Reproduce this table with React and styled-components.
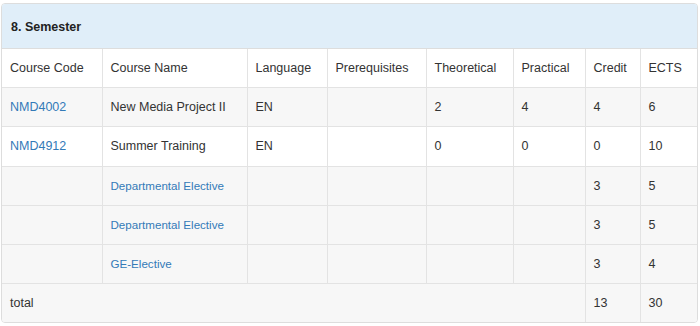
import React from "react";
import styled, { createGlobalStyle } from "styled-components";

const Global = createGlobalStyle`
  html, body { margin: 0; padding: 0; background: #fff; }
  body { font-family: "Liberation Sans", Arial, Helvetica, sans-serif; font-size: 12.5px; color: #333; }
`;

const Page = styled.div`
  padding: 3px 2px 0 1px;
`;

const Panel = styled.div`
  border: 1px solid #ddd;
  border-radius: 4px;
  overflow: hidden;
  background: #fff;
`;

const Heading = styled.div`
  background: #e0eef9;
  padding: 13px 9px 11px 9px;
  line-height: 20px;
  font-weight: bold;
  font-size: 12.5px;
  color: #222;
  border-bottom: 1px solid #ddd;
`;

const Table = styled.table`
  width: 100%;
  border-collapse: collapse;
  table-layout: fixed;
`;

const Row = styled.tr`
  background: ${(p) => (p.$striped ? "#f7f7f7" : "#fff")};
  &:not(:last-child) td { border-bottom: 1px solid #e3e3e3; }
`;

const Cell = styled.td`
  padding: 9px 8px 9px 8px;
  line-height: 20.2px;
  font-size: 12.5px;
  color: #333;
  vertical-align: top;
  white-space: nowrap;
  overflow: hidden;
  &:not(:first-child) { border-left: 1px solid #e3e3e3; }
`;

const Link = styled.a`
  color: #337ab7;
  text-decoration: none;
  font-size: ${(p) => (p.$small ? "11.6px" : "12.5px")};
`;

const widths = [100, 145, 80, 99, 87, 72, 55, 57];
const headers = ["Course Code", "Course Name", "Language", "Prerequisites", "Theoretical", "Practical", "Credit", "ECTS"];

const rows = [
  { code: "NMD4002", name: "New Media Project II", lang: "EN", t: "2", p: "4", c: "4", e: "6", striped: true },
  { code: "NMD4912", name: "Summer Training", lang: "EN", t: "0", p: "0", c: "0", e: "10", striped: false },
  { code: "", name: "Departmental Elective", elective: true, lang: "", t: "", p: "", c: "3", e: "5", striped: true },
  { code: "", name: "Departmental Elective", elective: true, lang: "", t: "", p: "", c: "3", e: "5", striped: true },
  { code: "", name: "GE-Elective", elective: true, lang: "", t: "", p: "", c: "3", e: "4", striped: true },
];

export default function App() {
  return (
    <Page>
      <Global />
      <Panel>
        <Heading>8. Semester</Heading>
        <Table>
          <colgroup>
            {widths.map((w, i) => (
              <col key={i} style={{ width: w }} />
            ))}
          </colgroup>
          <tbody>
            <Row>
              {headers.map((h) => (
                <Cell key={h}>{h}</Cell>
              ))}
            </Row>
            {rows.map((r, i) => (
              <Row key={i} $striped={r.striped}>
                <Cell>{r.code && <Link href="#">{r.code}</Link>}</Cell>
                <Cell>{r.elective ? <Link href="#" $small>{r.name}</Link> : r.name}</Cell>
                <Cell>{r.lang}</Cell>
                <Cell></Cell>
                <Cell>{r.t}</Cell>
                <Cell>{r.p}</Cell>
                <Cell>{r.c}</Cell>
                <Cell>{r.e}</Cell>
              </Row>
            ))}
            <Row $striped>
              <Cell colSpan={6}>total</Cell>
              <Cell>13</Cell>
              <Cell>30</Cell>
            </Row>
          </tbody>
        </Table>
      </Panel>
    </Page>
  );
}
